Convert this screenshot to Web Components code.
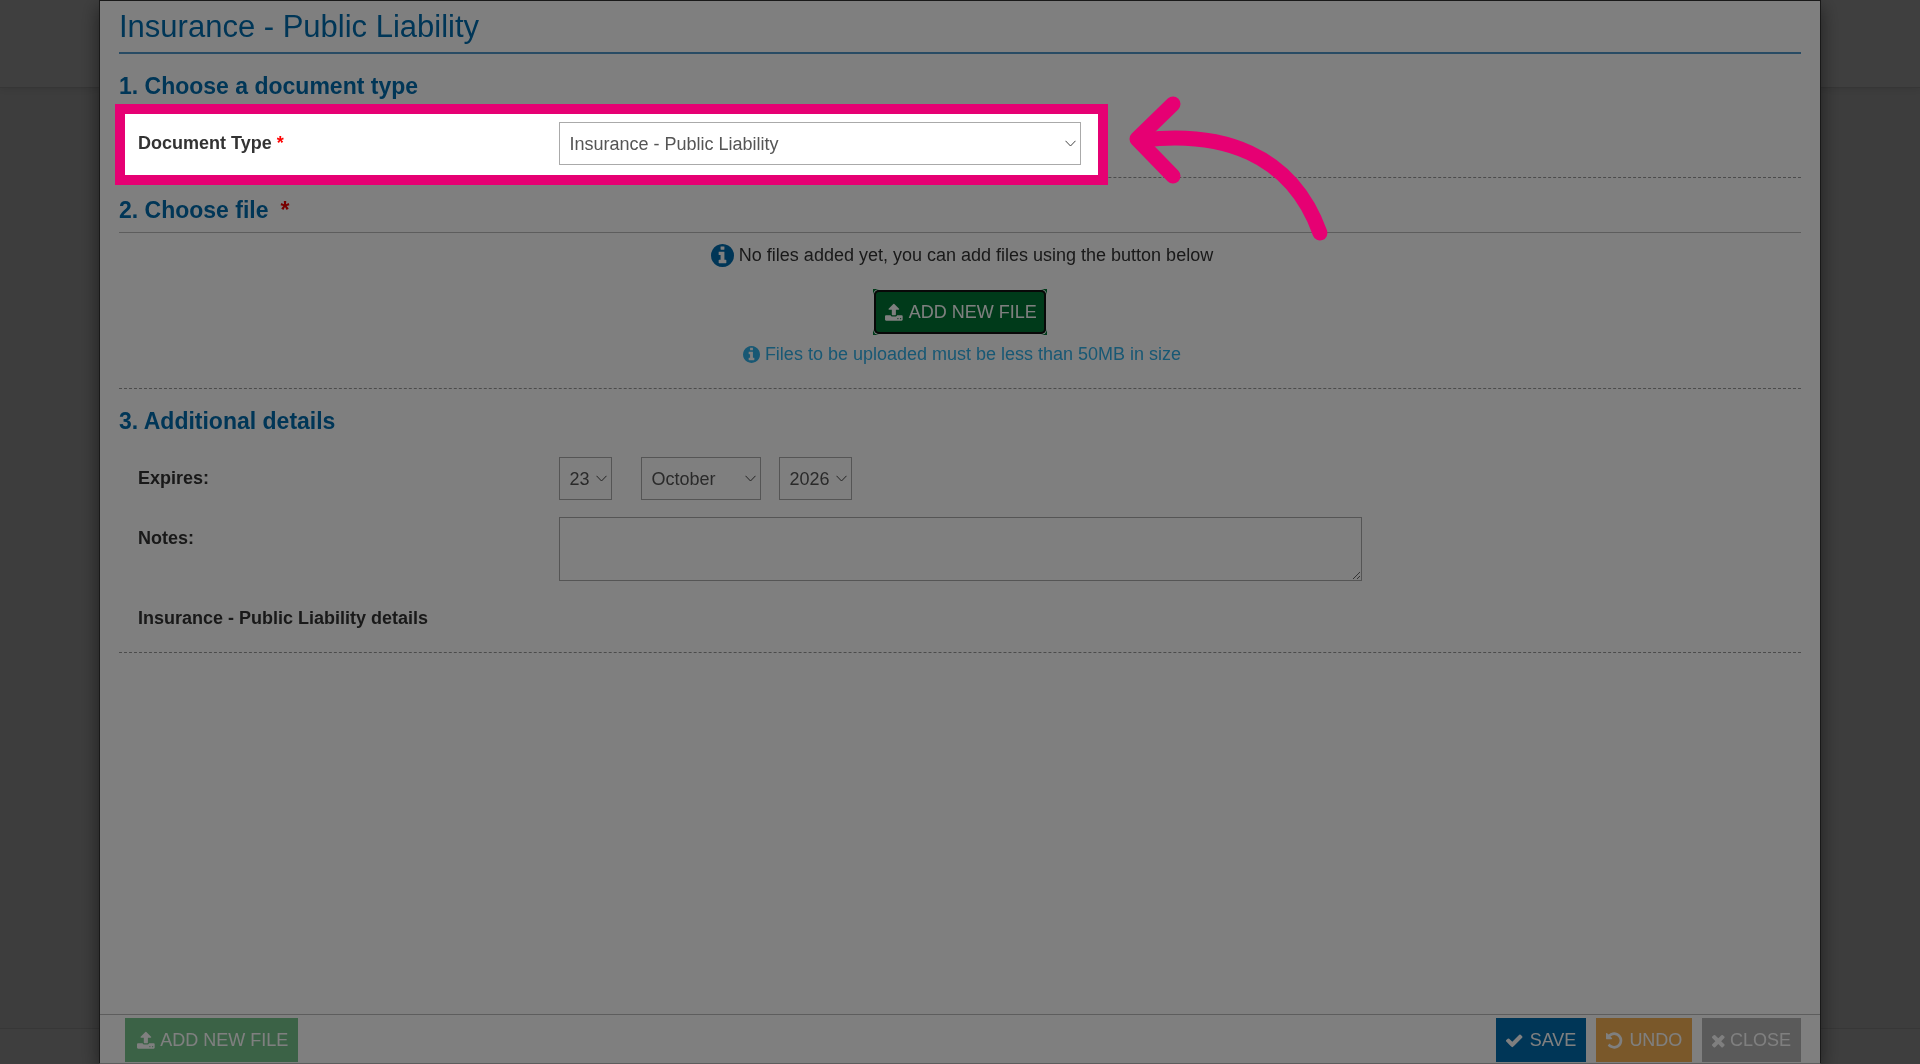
<!DOCTYPE html>
<html lang="en">
<head>
    <meta charset="utf-8">
    <meta name="viewport" content="width=device-width, initial-scale=1">
    <title>Insurance - Public Liability</title>
    <style>
        body {
            margin: 0;
            font-family: "Liberation Sans", Arial, sans-serif;
            font-size: 18px;
            line-height: 24px;
            color: #333;
        }
    </style>
</head>
<body>
    <page-shell></page-shell>
    <modal-dialog heading="Insurance - Public Liability">
        <document-form></document-form>
        <dialog-actions slot="footer"></dialog-actions>
    </modal-dialog>

    <script>
        const ICONS = {
            info: {
                box: '128 128 1536 1536',
                path: 'M1152 1376v-160q0-14-9-23t-23-9h-96v-512q0-14-9-23t-23-9h-320q-14 0-23 9t-9 23v160q0 14 9 23t23 9h96v320h-96q-14 0-23 9t-9 23v160q0 14 9 23t23 9h448q14 0 23-9t9-23zM1024 480v-160q0-14-9-23t-23-9h-192q-14 0-23 9t-9 23v160q0 14 9 23t23 9h192q14 0 23-9t9-23zM1664 896q0 209-103 385.5t-279.5 279.5-385.5 103-385.5-103-279.5-279.5-103-385.5 103-385.5 279.5-279.5 385.5-103 385.5 103 279.5 279.5 103 385.5z'
            },
            upload: {
                box: '-128 0 1920 1792',
                path: 'M1344 1472q0-26-19-45t-45-19-45 19-19 45 19 45 45 19 45-19 19-45zM1600 1472q0-26-19-45t-45-19-45 19-19 45 19 45 45 19 45-19 19-45zM1728 1248v320q0 40-28 68t-68 28h-1472q-40 0-68-28t-28-68v-320q0-40 28-68t68-28h427q21 56 70.5 92t110.5 36h256q61 0 110.5-36t70.5-92h427q40 0 68 28t28 68zM1403 600q-17 40-59 40h-256v448q0 26-19 45t-45 19h-256q-26 0-45-19t-19-45v-448h-256q-42 0-59-40-17-39 14-69l448-448q18-19 45-19t45 19l448 448q31 30 14 69z'
            },
            check: {
                box: '121 0 1750 1792',
                path: 'M1671 566q0 40-28 68l-724 724-136 136q-28 28-68 28t-68-28l-136-136-362-362q-28-28-28-68t28-68l136-136q28-28 68-28t68 28l294 295 656-657q28-28 68-28t68 28l136 136q28 28 28 68z'
            },
            undo: {
                box: '128 0 1700 1792',
                path: 'M1664 896q0 156-61 298t-164 245-245 164-298 61q-172 0-327-72.5t-264-204.5q-7-10-6.5-22.5t8.5-20.5l137-138q10-9 25-9 16 2 23 12 73 95 179 147t225 52q104 0 198.5-40.5t163.5-109.5 109.5-163.5 40.5-198.5-40.5-198.5-109.5-163.5-163.5-109.5-198.5-40.5q-98 0-188 35.5t-160 101.5l137 138q31 30 14 69-17 40-59 40h-448q-26 0-45-19t-19-45v-448q0-42 40-59 39-17 69 14l130 129q107-101 244.5-156.5t284.5-55.5q156 0 298 61t245 164 164 245 61 298z'
            },
            times: {
                box: '302 0 1188 1792',
                path: 'M1490 1322q0 40-28 68l-136 136q-28 28-68 28t-68-28l-294-294-294 294q-28 28-68 28t-68-28l-136-136q-28-28-28-68t28-68l294-294-294-294q-28-28-28-68t28-68l136-136q28-28 68-28t68 28l294 294 294-294q28-28 68-28t68 28l136 136q28 28 28 68t-28 68l-294 294 294 294q28 28 28 68z'
            }
        };

        class GlyphIcon extends HTMLElement {
            constructor() {
                super();
                this.attachShadow({ mode: 'open' });
            }

            connectedCallback() {
                const icon = ICONS[this.getAttribute('name')];
                this.shadowRoot.innerHTML = `
                    <style>
                        :host {
                            display: inline-flex;
                            height: 19px;
                        }
                        svg {
                            height: 100%;
                            fill: currentColor;
                        }
                    </style>
                    <svg viewBox="${icon.box}" aria-hidden="true"><path d="${icon.path}"/></svg>
                `;
            }
        }

        class ActionButton extends HTMLElement {
            constructor() {
                super();
                this.attachShadow({ mode: 'open' });
            }

            connectedCallback() {
                this.shadowRoot.innerHTML = `
                    <style>
                        :host {
                            display: inline-block;
                            --fill: #007535;
                        }
                        :host([kind="muted"]) {
                            --fill: #77c58d;
                        }
                        :host([kind="primary"]) {
                            --fill: #006cae;
                        }
                        :host([kind="warning"]) {
                            --fill: #f4b155;
                        }
                        :host([kind="neutral"]) {
                            --fill: #b4b4b4;
                        }
                        button {
                            position: relative;
                            display: flex;
                            align-items: center;
                            gap: 5px;
                            height: 44px;
                            padding: 0 10px;
                            border: 0;
                            background: var(--fill);
                            color: #fff;
                            font: inherit;
                            text-transform: uppercase;
                            cursor: pointer;
                        }
                        :host([ringed]) button {
                            height: 46px;
                        }
                        :host([ringed]) button::after {
                            content: "";
                            position: absolute;
                            inset: 1px;
                            border: 2px solid #101010;
                            border-radius: 5px;
                            box-shadow: 0 0 0 1px #fff;
                        }
                    </style>
                    <button type="button"><glyph-icon name="${this.getAttribute('icon')}"></glyph-icon><slot></slot></button>
                `;
            }
        }

        class SelectBox extends HTMLElement {
            constructor() {
                super();
                this.attachShadow({ mode: 'open' });
                this.shadowRoot.innerHTML = `
                    <style>
                        :host {
                            position: relative;
                            display: block;
                        }
                        ::slotted(select) {
                            display: block;
                            box-sizing: border-box;
                            width: 100%;
                            height: 43px;
                            padding: 0 10px;
                            border: 1px solid #aaa;
                            border-radius: 0;
                            background: #fff;
                            color: #555;
                            font: inherit;
                            appearance: none;
                        }
                        svg {
                            position: absolute;
                            right: 5px;
                            top: 18px;
                            width: 11px;
                            height: 7px;
                            fill: none;
                            stroke: #444;
                            pointer-events: none;
                        }
                    </style>
                    <slot></slot>
                    <svg viewBox="0 0 11 7" aria-hidden="true"><path d="M.5.8 5.5 6 10.5.8"/></svg>
                `;
            }
        }

        class FormSection extends HTMLElement {
            constructor() {
                super();
                this.attachShadow({ mode: 'open' });
            }

            connectedCallback() {
                const mark = this.hasAttribute('required') ? '<span>*</span>' : '';
                this.shadowRoot.innerHTML = `
                    <style>
                        :host {
                            display: block;
                            padding-top: 18px;
                            border-bottom: 1px dashed #999;
                        }
                        h2 {
                            margin: 0;
                            color: #006cae;
                            font-size: 23px;
                            line-height: 28px;
                        }
                        :host([ruled]) h2 {
                            padding-bottom: 8px;
                            border-bottom: 1px solid #bbb;
                        }
                        span {
                            margin-left: 12px;
                            color: #e00;
                        }
                    </style>
                    <h2>${this.getAttribute('heading')}${mark}</h2>
                    <slot></slot>
                `;
            }
        }

        class FormRow extends HTMLElement {
            constructor() {
                super();
                this.attachShadow({ mode: 'open' });
                this.shadowRoot.innerHTML = `
                    <style>
                        :host {
                            position: relative;
                            display: grid;
                            grid-template-columns: repeat(12, 1fr);
                        }
                        .label {
                            grid-column: span 3;
                            padding: 9px 19px 0;
                            font-weight: bold;
                        }
                        .field {
                            grid-column: span 6;
                            padding: 0 19px;
                        }
                        :host([narrow]) .field {
                            grid-column: span 4;
                        }
                    </style>
                    <div class="label"><slot name="label"></slot></div>
                    <div class="field"><slot></slot></div>
                    <slot name="overlay"></slot>
                `;
            }
        }

        /* Frames the current row and dims everything around it */
        class TourSpotlight extends HTMLElement {
            constructor() {
                super();
                this.attachShadow({ mode: 'open' });
                this.shadowRoot.innerHTML = `
                    <style>
                        :host {
                            position: absolute;
                            z-index: 10;
                            top: -18px;
                            bottom: -20px;
                            left: -4px;
                            width: calc(100% * 7 / 12 + 12px);
                            box-sizing: border-box;
                            border: 10px solid #e60073;
                            box-shadow: 0 0 0 200vmax rgba(0, 0, 0, .5);
                            pointer-events: none;
                        }
                        svg {
                            position: absolute;
                            left: 100%;
                            top: -20px;
                            width: 240px;
                            height: 160px;
                            fill: none;
                            stroke: #e60073;
                            stroke-width: 15;
                            stroke-linecap: round;
                            stroke-linejoin: round;
                        }
                    </style>
                    <svg viewBox="0 0 240 160" aria-hidden="true">
                        <path d="M75 10 39 45 75 82"/>
                        <path d="M45 46C122 37 193 58 222 139"/>
                    </svg>
                `;
            }
        }

        class DocumentForm extends HTMLElement {
            constructor() {
                super();
                this.attachShadow({ mode: 'open' });
                this.shadowRoot.innerHTML = `
                    <style>
                        :host {
                            display: block;
                        }
                        form-row {
                            margin-top: 17px;
                        }
                        .first {
                            margin-top: 22px;
                        }
                        .type {
                            margin-bottom: 12px;
                        }
                        .required {
                            color: #f00;
                        }
                        .files {
                            display: flex;
                            flex-direction: column;
                            align-items: center;
                            padding: 10px 0 22px;
                        }
                        p {
                            display: flex;
                            align-items: center;
                            gap: 5px;
                            margin: 0;
                            padding-left: 4px;
                        }
                        .empty glyph-icon {
                            height: 23px;
                            color: #006cae;
                        }
                        .files action-button {
                            margin: 22px 0 7px;
                        }
                        .hint {
                            color: #31b0e8;
                        }
                        .hint glyph-icon {
                            height: 17px;
                        }
                        .date {
                            display: flex;
                        }
                        .day {
                            width: 53px;
                            margin-right: 29px;
                        }
                        .month {
                            width: 120px;
                            margin-right: 18px;
                        }
                        .year {
                            width: 73px;
                        }
                        textarea {
                            display: block;
                            box-sizing: border-box;
                            width: 100%;
                            height: 64px;
                            padding: 8px 10px;
                            border: 1px solid #aaa;
                            background: #fff;
                            color: #555;
                            font: inherit;
                            resize: vertical;
                        }
                        h3 {
                            margin: 25px 19px 22px;
                            font-size: 18px;
                            line-height: 24px;
                        }
                    </style>
                    <form-section heading="1. Choose a document type">
                        <form-row class="first type" narrow>
                            <label slot="label" for="type">Document Type <span class="required">*</span></label>
                            <select-box>
                                <select id="type"><option>Insurance - Public Liability</option></select>
                            </select-box>
                            <tour-spotlight slot="overlay"></tour-spotlight>
                        </form-row>
                    </form-section>
                    <form-section heading="2. Choose file" required ruled>
                        <div class="files">
                            <p class="empty"><glyph-icon name="info"></glyph-icon>No files added yet, you can add files using the button below</p>
                            <action-button icon="upload" ringed>Add new file</action-button>
                            <p class="hint"><glyph-icon name="info"></glyph-icon>Files to be uploaded must be less than 50MB in size</p>
                        </div>
                    </form-section>
                    <form-section heading="3. Additional details">
                        <form-row class="first">
                            <label slot="label" for="day">Expires:</label>
                            <div class="date">
                                <select-box class="day">
                                    <select id="day"><option>23</option></select>
                                </select-box>
                                <select-box class="month">
                                    <select aria-label="Month"><option>October</option></select>
                                </select-box>
                                <select-box class="year">
                                    <select aria-label="Year"><option>2026</option></select>
                                </select-box>
                            </div>
                        </form-row>
                        <form-row>
                            <label slot="label" for="notes">Notes:</label>
                            <textarea id="notes"></textarea>
                        </form-row>
                        <h3>Insurance - Public Liability details</h3>
                    </form-section>
                `;
            }
        }

        class DialogActions extends HTMLElement {
            constructor() {
                super();
                this.attachShadow({ mode: 'open' });
                this.shadowRoot.innerHTML = `
                    <style>
                        :host {
                            display: flex;
                            gap: 10px;
                            padding: 3px 19px 1px 25px;
                        }
                        .left {
                            margin-right: auto;
                        }
                    </style>
                    <action-button class="left" kind="muted" icon="upload">Add new file</action-button>
                    <action-button kind="primary" icon="check">Save</action-button>
                    <action-button kind="warning" icon="undo">Undo</action-button>
                    <action-button kind="neutral" icon="times">Close</action-button>
                `;
            }
        }

        class ModalDialog extends HTMLElement {
            constructor() {
                super();
                this.attachShadow({ mode: 'open' });
            }

            connectedCallback() {
                this.shadowRoot.innerHTML = `
                    <style>
                        :host {
                            position: fixed;
                            inset: 0;
                            display: flex;
                            padding: 0 99px;
                            background: rgba(0, 0, 0, .5);
                        }
                        .dialog {
                            flex: 1;
                            display: flex;
                            flex-direction: column;
                            border: 1px solid #333;
                            border-bottom-color: #bbb;
                            background: #fff;
                            box-shadow: 0 6px 18px rgba(0, 0, 0, .5);
                        }
                        .content {
                            flex: 1;
                            padding: 6px 19px 0;
                        }
                        h1 {
                            margin: 0;
                            padding-bottom: 5px;
                            border-bottom: 2px solid #5096c8;
                            color: #006cae;
                            font-size: 31px;
                            font-weight: normal;
                            line-height: 40px;
                        }
                        footer {
                            border-top: 1px solid #bbb;
                        }
                    </style>
                    <div class="dialog" role="dialog" aria-labelledby="title">
                        <div class="content">
                            <h1 id="title">${this.getAttribute('heading')}</h1>
                            <slot></slot>
                        </div>
                        <footer><slot name="footer"></slot></footer>
                    </div>
                `;
            }
        }

        class PageShell extends HTMLElement {
            constructor() {
                super();
                this.attachShadow({ mode: 'open' });
                this.shadowRoot.innerHTML = `
                    <style>
                        :host {
                            display: flex;
                            flex-direction: column;
                            height: 100vh;
                            background: #f5f5f5;
                        }
                        header {
                            height: 87px;
                            background: #fff;
                            border-bottom: 1px solid #d8d8d8;
                            box-shadow: 0 1px 8px rgba(0, 0, 0, .1);
                        }
                        main {
                            flex: 1;
                        }
                        footer {
                            height: 35px;
                            border-top: 1px solid #ddd;
                            background: #f8f8f8;
                        }
                    </style>
                    <header></header>
                    <main></main>
                    <footer></footer>
                `;
            }
        }

        customElements.define('glyph-icon', GlyphIcon);
        customElements.define('action-button', ActionButton);
        customElements.define('select-box', SelectBox);
        customElements.define('form-section', FormSection);
        customElements.define('form-row', FormRow);
        customElements.define('tour-spotlight', TourSpotlight);
        customElements.define('document-form', DocumentForm);
        customElements.define('dialog-actions', DialogActions);
        customElements.define('modal-dialog', ModalDialog);
        customElements.define('page-shell', PageShell);
    </script>
</body>
</html>
